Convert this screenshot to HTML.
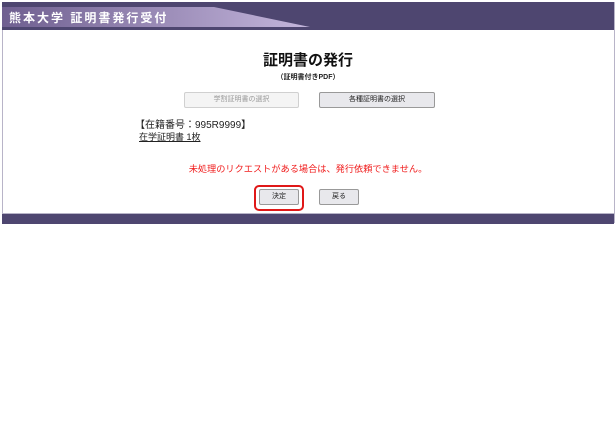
<!DOCTYPE html>
<html><head><meta charset="utf-8"><style>
body{margin:0;width:616px;height:430px;background:#fff;font-family:"Liberation Sans","Noto Sans CJK JP",sans-serif;position:relative;overflow:hidden}
.frame{position:absolute;left:2px;top:2px;width:611px;height:221px;border-left:1px solid #b8b4c8;border-right:1px solid #b8b4c8}
.hdr{position:absolute;left:2px;top:2px;width:612px;height:28px;background:#4e4670}
.hdr svg{position:absolute;left:0;top:0}
.hdr .t{position:absolute;left:7px;top:7px;color:#fff;font-size:12px;font-weight:bold;letter-spacing:2px}
.ftr{position:absolute;left:2px;top:213px;width:612px;height:10px;background:#4e4670;border-top:1px solid #b8b4c8}
.h1{position:absolute;left:0;width:616px;top:49px;text-align:center;font-size:15px;font-weight:bold;color:#111}
.h2{position:absolute;left:0;width:616px;top:72px;text-align:center;font-size:7px;font-weight:bold;color:#222}
.btn{position:absolute;height:14px;border:1px solid #b8b8b8;border-radius:2px;font-size:7px;text-align:center;line-height:14px}
.red{position:absolute;left:0;width:616px;top:161px;text-align:center;color:#f01c1c;font-size:9.2px}
</style></head><body>
<div class="frame"></div>
<div class="hdr">
<svg width="612" height="28"><defs><linearGradient id="g" x1="0" x2="1"><stop offset="0" stop-color="#6f5f90"/><stop offset="1" stop-color="#c4b6dc"/></linearGradient></defs>
<polygon points="0,5 212,5 308,25 0,25" fill="url(#g)"/></svg>
<div class="t">熊本大学 証明書発行受付</div>
</div>
<div class="h1">証明書の発行</div>
<div class="h2">（証明書付きPDF）</div>
<div class="btn" style="left:184px;top:92px;width:113px;background:#f4f4f4;color:#999;border-color:#d0d0d0">学割証明書の選択</div>
<div class="btn" style="left:319px;top:92px;width:114px;background:#e8e8ec;color:#222;border-color:#999">各種証明書の選択</div>
<div style="position:absolute;left:135px;top:116px;font-size:10px;color:#222">【在籍番号：995R9999】</div>
<div style="position:absolute;left:139px;top:130px;font-size:9px;color:#222;text-decoration:underline">在学証明書 1枚</div>
<div class="red">未処理のリクエストがある場合は、発行依頼できません。</div>
<div style="position:absolute;left:254px;top:185px;width:46px;height:22px;border:2px solid #e01818;border-radius:5px"></div>
<div class="btn" style="left:259px;top:189px;width:38px;background:#e8e8ec;color:#222;border-color:#999">決定</div>
<div class="btn" style="left:319px;top:189px;width:38px;background:#e8e8ec;color:#222;border-color:#999">戻る</div>
<div class="ftr"></div>
</body></html>
